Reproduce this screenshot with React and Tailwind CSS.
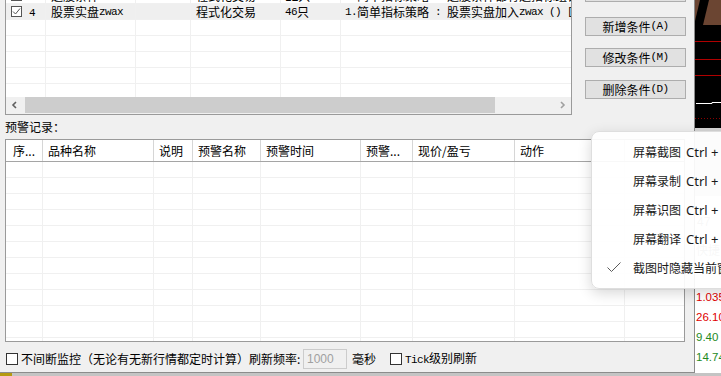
import React from 'react';

// latin text in the old dialog is a narrow bitmap face
const L = ({ children }) => (
  <span className="font-['Liberation_Mono',monospace] text-[11px] tracking-[-0.6px] whitespace-pre">{children}</span>
);

const topCols = ['w-[40px]', 'w-[90px]', 'w-[55px]', 'w-[90px]', 'w-[60px]', 'flex-1'];
const logCols = ['w-[37px]', 'w-[111px]', 'w-[39px]', 'w-[68px]', 'w-[100px]', 'w-[52px]', 'w-[102px]', 'w-[110px]', 'flex-1'];

const Check = ({ checked }) => (
  <span className="w-[11px] h-[11px] border border-[#555] bg-white flex items-center justify-center shrink-0">
    {checked && (
      <svg width="9" height="9" viewBox="0 0 9 9">
        <polyline points="1,4.5 3.5,7 8,1.5" fill="none" stroke="#555" strokeWidth="1" />
      </svg>
    )}
  </span>
);

const TopRow = ({ cells = [], className = '' }) => (
  <div className={`flex h-[16px] border-t border-[#f0f0f0] ${className}`}>
    {topCols.map((w, i) => (
      <div
        key={i}
        className={`${w} ${i < 5 ? 'border-r border-[#f0f0f0]' : ''} flex items-center overflow-hidden whitespace-nowrap leading-[14px] ${i >= 4 ? 'pl-[4px]' : 'pl-[5px]'}`}
      >
        {cells[i]}
      </div>
    ))}
  </div>
);

const Button = ({ children, className = '' }) => (
  <div className={`w-[101px] h-[19px] border border-[#adadad] bg-[#e1e1e1] flex items-center justify-center leading-none ${className}`}>
    {children}
  </div>
);

const LogRow = () => (
  <div className="flex h-[16px] border-b border-[#f0f0f0] shrink-0">
    {logCols.map((w, i) => (
      <div key={i} className={`${w} ${i < 8 ? 'border-r border-[#f0f0f0]' : ''}`} />
    ))}
  </div>
);

const headers = ['序...', '品种名称', '说明', '预警名称', '预警时间', '预警...', '现价/盈亏', '动作', ''];

const menuItems = [
  { label: '屏幕截图', key: 'Ctrl + Alt + A' },
  { label: '屏幕录制', key: 'Ctrl + Alt + S' },
  { label: '屏幕识图', key: 'Ctrl + Alt + O' },
  { label: '屏幕翻译', key: 'Ctrl + Alt + F' },
];

export default function App() {
  return (
    <div className="w-[721px] h-[376px] overflow-hidden relative flex flex-col bg-[#c9c9c9] font-['Noto_Sans_CJK_SC',sans-serif] text-[12px] text-black">
      <div className="flex h-[373px] shrink-0">
        {/* dialog */}
        <div className="w-[695px] h-[373px] bg-[#f0f0f0] border-r border-b border-[#8c8c8c] flex flex-col shrink-0">
          {/* condition list + buttons */}
          <div className="flex h-[115px] shrink-0">
            <div className="ml-[5px] w-[567px] h-[115px] border-l border-r border-b border-[#9a9a9a] bg-white flex flex-col">
              <div className="h-[97px] overflow-hidden">
                <TopRow
                  className="mt-[-13px]"
                  cells={[
                    <><Check checked /><span className="ml-[7px]"><L>3</L></span></>,
                    <>选股条件<L>abc</L></>,
                    '',
                    '程式化交易',
                    <>12只</>,
                    <><L>1.</L>简单指标策略<L>{' : '}</L>选股条件都有选指标组合</>,
                  ]}
                />
                <TopRow
                  className="bg-[#efefef]"
                  cells={[
                    <><Check checked /><span className="ml-[7px]"><L>4</L></span></>,
                    <>股票实盘<L>zwax</L></>,
                    '',
                    '程式化交易',
                    <><L>46</L>只</>,
                    <><L>1.</L>简单指标策略<L>{' : '}</L>股票实盘加入<L>{'zwax () ['}</L></>,
                  ]}
                />
                <TopRow />
                <TopRow />
                <TopRow />
                <TopRow />
                <TopRow />
              </div>
              <div className="h-[17px] bg-[#f0f0f0] flex">
                <div className="w-[17px] h-[16px] flex items-center justify-center">
                  <svg width="7" height="8" viewBox="0 0 7 8">
                    <polyline points="5,1 2,4 5,7" fill="none" stroke="#606060" strokeWidth="1.6" />
                  </svg>
                </div>
                <div className="flex-1 h-[16px] flex">
                  <div className="ml-[2px] w-[470px] h-[16px] bg-[#cdcdcd]" />
                </div>
                <div className="w-[17px] h-[16px] flex items-center justify-center">
                  <svg width="7" height="8" viewBox="0 0 7 8">
                    <polyline points="2,1 5,4 2,7" fill="none" stroke="#a0a0a0" strokeWidth="1.6" />
                  </svg>
                </div>
              </div>
            </div>

            <div className="ml-[13px] flex flex-col">
              <Button className="mt-[-17px]">修改参数</Button>
              <Button className="mt-[15px]">新增条件<L>(A)</L></Button>
              <Button className="mt-[12px]">修改条件<L>(M)</L></Button>
              <Button className="mt-[13px]">删除条件<L>(D)</L></Button>
            </div>
          </div>

          {/* log label */}
          <div className="h-[24px] pl-[5px] pt-[5px] leading-[14px] shrink-0">预警记录：</div>

          {/* log table */}
          <div className="ml-[5px] w-[680px] h-[203px] border border-[#9a9a9a] bg-white flex flex-col overflow-hidden shrink-0">
            <div className="flex h-[22px] border-b border-[#a5a5a5] shrink-0">
              {logCols.map((w, i) => (
                <div
                  key={i}
                  className={`${w} ${i < 8 ? 'border-r border-[#d6d6d6]' : ''} flex items-center leading-[14px] whitespace-nowrap overflow-hidden ${i === 0 ? 'pl-[7px]' : 'pl-[5px]'}`}
                >
                  {headers[i]}
                </div>
              ))}
            </div>
            {Array.from({ length: 12 }).map((_, i) => (
              <LogRow key={i} />
            ))}
          </div>

          {/* bottom options */}
          <div className="h-[30px] pt-[4px] flex items-center shrink-0 whitespace-nowrap leading-[14px]">
            <span className="ml-[6px] w-[12px] h-[12px] border border-[#333] bg-white shrink-0" />
            <span className="ml-[3px] w-[282px] shrink-0">不间断监控（无论有无新行情都定时计算）刷新频率:</span>
            <div className="w-[44px] h-[20px] border border-[#cccccc] bg-[#f0f0f0] flex items-center pl-[3px] shrink-0">
              <span className="font-['Liberation_Sans',sans-serif] text-[12px] text-[#a0a0a0]">1000</span>
            </div>
            <span className="ml-[5px]">毫秒</span>
            <span className="ml-[14px] w-[12px] h-[12px] border border-[#333] bg-white shrink-0" />
            <span className="ml-[3px]"><L>Tick</L>级别刷新</span>
          </div>
        </div>

        {/* window behind, right side */}
        <div className="w-[26px] flex flex-col shrink-0 bg-white">
          <div className="h-[128px] bg-black shrink-0">
            <svg width="26" height="128" viewBox="0 0 26 128">
              <polygon points="0,0 5,0 0,21" fill="#6b4532" />
              <polygon points="14,0 26,0 26,25 8,25" fill="#6b4532" />
              <line x1="0" y1="41.5" x2="26" y2="41.5" stroke="#b00000" />
              <line x1="0" y1="59.5" x2="26" y2="59.5" stroke="#b00000" />
              <line x1="0" y1="75.5" x2="26" y2="75.5" stroke="#b00000" />
              <polyline points="1,103.5 17,103.5 17,102.5 26,102.5" fill="none" stroke="#ffffff" />
              <line x1="0" y1="118.5" x2="26" y2="118.5" stroke="#8a0000" strokeDasharray="1 2" />
            </svg>
          </div>
          <div className="h-[68px] bg-[#d6d6d6] shrink-0" />
          <div className="h-[16px] shrink-0" />
          <div className="h-[20px] pl-[2px] flex items-center text-[12px] text-[#9a9a9a] font-['Liberation_Sans',sans-serif] shrink-0">47</div>
          <div className="h-[36px] pl-[1px] flex items-center text-[12px] text-[#9a9a9a] whitespace-nowrap shrink-0">快捷</div>
          <div className="h-[19px] shrink-0" />
          <div className="font-['Liberation_Sans',sans-serif] text-[11.5px] leading-[20px] pl-[1px] whitespace-nowrap">
            <div className="h-[20px] text-[#e00000]">1.035</div>
            <div className="h-[20px] text-[#e00000]">26.10</div>
            <div className="h-[20px] text-[#1e8a1e]">9.40</div>
            <div className="h-[20px] text-[#1e8a1e]">14.74</div>
            <div className="h-[20px] text-[#1e8a1e]">3.21</div>
          </div>
        </div>
      </div>

      {/* strip of the window under the dialog */}
      <div className="h-[3px] flex shrink-0">
        <div className="w-[12px] bg-[#b59a10]" />
        <div className="flex-1 bg-[#c4c4c4]" />
      </div>

      {/* context menu */}
      <div className="absolute left-[591px] top-[131px] w-[170px] h-[158px] rounded-[8px] border border-[#dedede] bg-white/[0.92] shadow-[0_4px_14px_rgba(0,0,0,0.16)] pt-[5px]">
        {menuItems.map((m) => (
          <div key={m.label} className="h-[29px] flex items-center whitespace-nowrap text-[#1a1a1a] leading-[14px]">
            <span className="w-[41px] shrink-0" />
            <span>{m.label}</span>
            <span className="ml-[5px] font-['Noto_Sans',sans-serif] text-[13px]">{m.key}</span>
          </div>
        ))}
        <div className="h-[29px] flex items-center whitespace-nowrap text-[#1a1a1a] leading-[14px]">
          <span className="w-[41px] shrink-0 pl-[15px] flex items-center">
            <svg width="14" height="11" viewBox="0 0 14 11">
              <polyline points="0.5,5.5 4.5,9.5 13.5,0.5" fill="none" stroke="#5a5a5a" strokeWidth="1" />
            </svg>
          </span>
          <span>截图时隐藏当前窗口</span>
        </div>
      </div>
    </div>
  );
}
